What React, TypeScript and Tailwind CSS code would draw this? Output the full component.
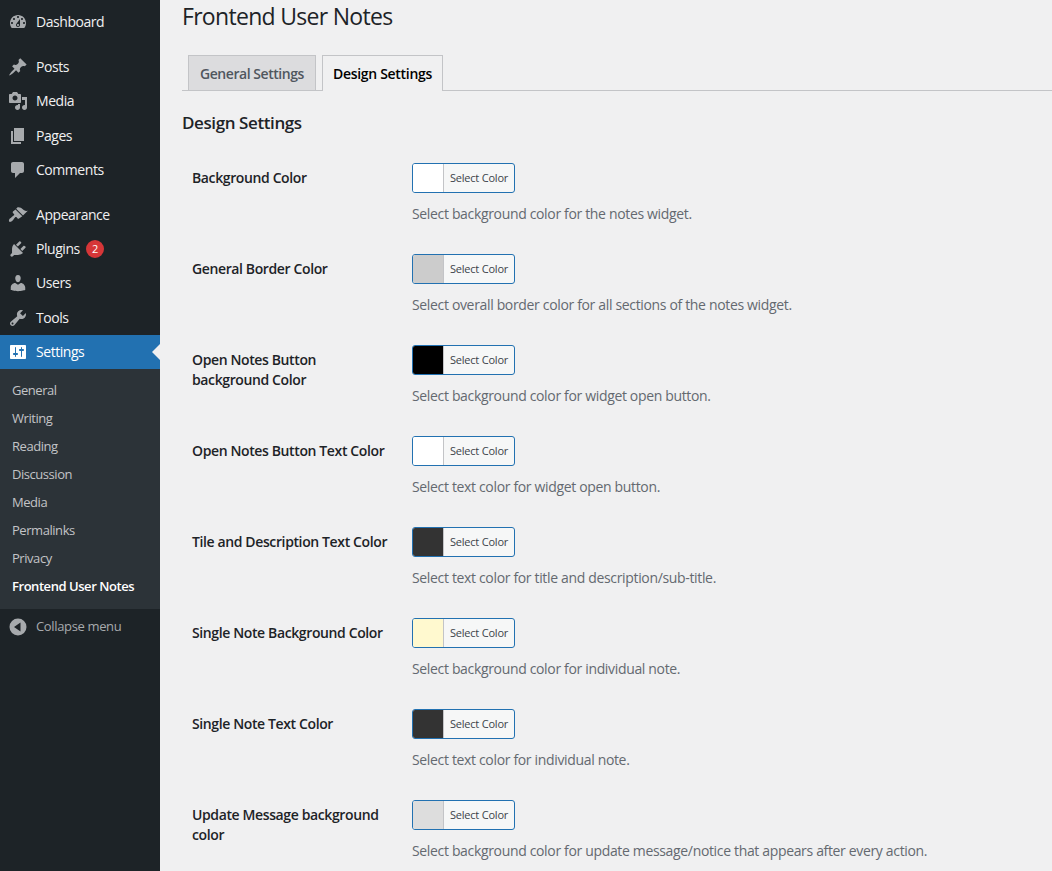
const icons: Record<string, string> = {
  dashboard:
    'M3.76 16h12.48c1.1-1.37 1.76-3.11 1.76-5 0-4.42-3.58-8-8-8s-8 3.58-8 8c0 1.89.66 3.63 1.76 5zM10 4c.55 0 1 .45 1 1s-.45 1-1 1-1-.45-1-1 .45-1 1-1zM6 6c.55 0 1 .45 1 1s-.45 1-1 1-1-.45-1-1 .45-1 1-1zm8 0c.55 0 1 .45 1 1s-.45 1-1 1-1-.45-1-1 .45-1 1-1zm-5.37 5.55L12 7v6c0 1.1-.9 2-2 2s-2-.9-2-2c0-.57.24-1.08.63-1.45zM4 10c.55 0 1 .45 1 1s-.45 1-1 1-1-.45-1-1 .45-1 1-1zm12 0c.55 0 1 .45 1 1s-.45 1-1 1-1-.45-1-1 .45-1 1-1zm-5 3c0-.55-.45-1-1-1s-1 .45-1 1 .45 1 1 1 1-.45 1-1z',
  posts:
    'M10.44 3.02l1.82-1.82 6.36 6.35-1.83 1.82c-1.05-.68-2.48-.57-3.41.36l-.75.75c-.92.93-1.04 2.35-.35 3.41l-1.83 1.82-2.41-2.41-2.8 2.79c-.42.42-3.38 2.71-3.8 2.29s1.86-3.39 2.28-3.81l2.79-2.79L4.1 9.36l1.83-1.82c1.05.69 2.48.57 3.4-.36l.75-.75c.93-.92 1.05-2.35.36-3.41z',
  media:
    'M13 11V4c0-.55-.45-1-1-1h-1.67L9 1H5L3.67 3H2c-.55 0-1 .45-1 1v7c0 .55.45 1 1 1h10c.55 0 1-.45 1-1zM7 4.5c1.38 0 2.5 1.12 2.5 2.5S8.38 9.5 7 9.5 4.5 8.38 4.5 7 5.62 4.5 7 4.5zM14 6h5v10.5c0 1.38-1.12 2.5-2.5 2.5S14 17.88 14 16.5s1.12-2.5 2.5-2.5c.17 0 .34.02.5.05V9h-3V6zm-4 8.05V13h2v3.5c0 1.38-1.12 2.5-2.5 2.5S7 17.88 7 16.5 8.12 14 9.5 14c.17 0 .34.02.5.05z',
  pages: 'M6 15V2h10v13H6zm-1 1h8v2H3V5h2v11z',
  comments: 'M5 2h9c1.1 0 2 .9 2 2v7c0 1.1-.9 2-2 2h-2l-5 5v-5H5c-1.1 0-2-.9-2-2V4c0-1.1.9-2 2-2z',
  appearance:
    'M15 10.6L8.2 3.8l1.1-1.3c.5-.56 2.3-.47 3.51.32 1.21.8 1.43 1.28 2.91 2.1 1.18.64 2.45 1.26 4.05.85zM14.3 11.3L7.5 4.5 4.93 6.47c-.39.39-.39 1.02 0 1.41l1.06 1.06c.39.39.39 1.03 0 1.42-.6.6-1.43 1.11-2.21 1.69-.35.26-.7.53-1.01.84C1.43 13.23.4 15.6 1.15 16.6c.75.83 2.6-.16 3.5-1.03.3-.31.58-.65.84-1 .58-.78 1.09-1.61 1.69-2.21.39-.39 1.02-.39 1.41 0l1.06 1.06c.39.39 1.02.39 1.41 0z',
  plugins:
    'M13.11 4.36L9.87 7.6 8 5.73l3.24-3.24c.35-.34 1.05-.2 1.56.32.52.51.66 1.21.31 1.55zm-8 1.77l.91-1.12 9.01 9.01-1.19.84c-.71.71-2.63 1.16-3.82 1.16H6.14L4.9 17.26c-.59.59-1.54.59-2.12 0-.59-.58-.59-1.53 0-2.12l1.24-1.24v-3.88c0-1.13.4-3.19 1.09-3.89zm7.26 3.97l3.24-3.24c.34-.35 1.04-.21 1.55.31.52.51.66 1.21.31 1.55l-3.24 3.25z',
  users:
    'M10 9.25c-2.27 0-2.73-3.44-2.73-3.44C7 4.02 7.82 2 9.97 2c2.16 0 2.98 2.02 2.71 3.81 0 0-.41 3.44-2.68 3.44zm0 2.57L12.72 10c2.39 0 4.52 2.33 4.52 4.53v2.49s-3.65 1.13-7.24 1.13c-3.65 0-7.24-1.13-7.24-1.13v-2.49c0-2.25 1.94-4.48 4.47-4.48z',
  tools:
    'M16.68 9.77c-1.34 1.34-3.3 1.67-4.95.99l-5.41 6.52c-.99.99-2.59.99-3.58 0s-.99-2.59 0-3.57l6.52-5.42c-.68-1.65-.35-3.61.99-4.95 1.28-1.28 3.12-1.62 4.72-1.06l-2.89 2.89 2.82 2.82 2.86-2.87c.53 1.58.18 3.39-1.08 4.65zM3.81 16.21c.4.39 1.04.39 1.43 0 .4-.4.4-1.04 0-1.43-.39-.4-1.03-.4-1.43 0-.39.39-.39 1.03 0 1.43z',
  settings:
    'M18 16V4c0-.55-.45-1-1-1H3c-.55 0-1 .45-1 1v12c0 .55.45 1 1 1h14c.55 0 1-.45 1-1zM8 11h1c.55 0 1 .45 1 1s-.45 1-1 1H8v1.5c0 .28-.22.5-.5.5s-.5-.22-.5-.5V13H6c-.55 0-1-.45-1-1s.45-1 1-1h1V5.5c0-.28.22-.5.5-.5s.5.22.5.5V11zm5-2h-1c-.55 0-1-.45-1-1s.45-1 1-1h1V5.5c0-.28.22-.5.5-.5s.5.22.5.5V7h1c.55 0 1 .45 1 1s-.45 1-1 1h-1v5.5c0 .28-.22.5-.5.5s-.5-.22-.5-.5V9z',
  collapse: 'M10 1.5a8.5 8.5 0 1 0 0 17 8.5 8.5 0 0 0 0-17zM12.5 14.5L6 10l6.5-4.5v9z',
}

const Icon = ({ name, className }: { name: string; className: string }) => (
  <svg viewBox="0 0 20 20" className={className} fill="currentColor" fillRule="evenodd">
    <path d={icons[name]} />
  </svg>
)

const MenuItem = ({ icon, label, badge }: { icon: string; label: string; badge?: string }) => (
  <div className="flex h-[34.2px] items-center text-[#f0f0f1]">
    <Icon name={icon} className="ml-[8px] h-5 w-5 text-[#a7aaad]" />
    <span className="ml-[8px] pb-[1px]">{label}</span>
    {badge && (
      <span className="ml-[6px] flex h-[18px] w-[18px] items-center justify-center rounded-full bg-[#d63638] text-[11px] text-white">
        {badge}
      </span>
    )}
  </div>
)

const subItems = ['General', 'Writing', 'Reading', 'Discussion', 'Media', 'Permalinks', 'Privacy']

const Sidebar = () => (
  <aside className="w-[160px] shrink-0 bg-[#1d2327] pt-[5px] text-[14px] tracking-[-0.45px]">
    <MenuItem icon="dashboard" label="Dashboard" />
    <div className="h-[11px]" />
    <MenuItem icon="posts" label="Posts" />
    <MenuItem icon="media" label="Media" />
    <MenuItem icon="pages" label="Pages" />
    <MenuItem icon="comments" label="Comments" />
    <div className="h-[11px]" />
    <MenuItem icon="appearance" label="Appearance" />
    <MenuItem icon="plugins" label="Plugins" badge="2" />
    <MenuItem icon="users" label="Users" />
    <MenuItem icon="tools" label="Tools" />
    <div className="relative flex h-[34.2px] items-center bg-[#2271b1] text-white">
      <Icon name="settings" className="ml-[8px] h-5 w-5 text-white" />
      <span className="ml-[8px] pb-[1px]">Settings</span>
      <span className="absolute right-0 top-[9px] border-y-[8px] border-r-[8px] border-y-transparent border-r-[#f0f0f1]" />
    </div>
    <div className="flex h-[240px] flex-col bg-[#2c3338] pt-[8px] text-[13px]">
      {subItems.map((s) => (
        <div key={s} className="flex h-[28.05px] items-center pl-[12px] text-[#c3c4c7]">
          {s}
        </div>
      ))}
      <div className="flex h-[28.05px] items-center pl-[12px] font-semibold text-white">Frontend User Notes</div>
    </div>
    <div className="mt-[1px] flex h-[34px] items-center text-[13px] tracking-[-0.35px] text-[#a7aaad]">
      <Icon name="collapse" className="ml-[8px] h-5 w-5" />
      <span className="ml-[8px]">Collapse menu</span>
    </div>
  </aside>
)

const Swatch = ({ color }: { color: string }) => (
  <div className="flex h-[30px] w-[103px] overflow-hidden rounded-[3px] border border-[#2271b1] bg-[#f6f7f7]">
    <div className={`w-[31px] border-r border-[#c3c4c7] ${color}`} />
    <div className="flex flex-1 items-center justify-center text-[11px] tracking-[-0.2px] text-[#3c434a]">Select Color</div>
  </div>
)

const Row = ({ label, color, desc }: { label: React.ReactNode; color: string; desc: string }) => (
  <div className="flex h-[91px] pl-[10px]">
    <div className="w-[220px] pt-[5px] text-[14px] font-semibold leading-[20px] tracking-[-0.38px] text-[#1d2327]">{label}</div>
    <div>
      <Swatch color={color} />
      <p className="mt-[10px] text-[14px] leading-[21px] tracking-[-0.34px] text-[#646970]">{desc}</p>
    </div>
  </div>
)

const rows = [
  { label: 'Background Color', color: 'bg-white', desc: 'Select background color for the notes widget.' },
  { label: 'General Border Color', color: 'bg-[#cccccc]', desc: 'Select overall border color for all sections of the notes widget.' },
  {
    label: (
      <>
        Open Notes Button
        <br />
        background Color
      </>
    ),
    color: 'bg-black',
    desc: 'Select background color for widget open button.',
  },
  { label: 'Open Notes Button Text Color', color: 'bg-white', desc: 'Select text color for widget open button.' },
  { label: 'Tile and Description Text Color', color: 'bg-[#333333]', desc: 'Select text color for title and description/sub-title.' },
  { label: 'Single Note Background Color', color: 'bg-[#fff9cf]', desc: 'Select background color for individual note.' },
  { label: 'Single Note Text Color', color: 'bg-[#333333]', desc: 'Select text color for individual note.' },
  {
    label: (
      <>
        Update Message background
        <br />
        color
      </>
    ),
    color: 'bg-[#dddddd]',
    desc: 'Select background color for update message/notice that appears after every action.',
  },
]

export default function App() {
  return (
    <div className="flex h-[871px] overflow-hidden bg-[#f0f0f1] font-['Open_Sans',sans-serif]">
      <Sidebar />
      <main className="min-w-0 flex-1 pl-[22px]">
        <h1 className="pt-[1px] text-[23px] leading-[30px] tracking-[-0.7px] text-[#1d2327]">Frontend User Notes</h1>
        <div className="mt-[24px] flex h-[36px] gap-[6px] border-b border-[#c3c4c7] pl-[6px] text-[14px] font-semibold">
          <div className="flex h-[36px] w-[128px] items-center justify-center border border-[#c3c4c7] bg-[#dcdcde] tracking-[-0.45px] text-[#50575e]">General Settings</div>
          <div className="flex h-[36px] w-[121px] items-center justify-center border border-b-0 border-[#c3c4c7] bg-[#f0f0f1] tracking-[-0.3px] text-black">Design Settings</div>
        </div>
        <h2 className="mt-[20px] text-[17px] font-semibold leading-[24px] tracking-[-0.4px] text-[#1d2327]">Design Settings</h2>
        <div className="mt-[28px]">
          {rows.map((r) => (
            <Row key={r.desc} label={r.label} color={r.color} desc={r.desc} />
          ))}
        </div>
      </main>
    </div>
  )
}
